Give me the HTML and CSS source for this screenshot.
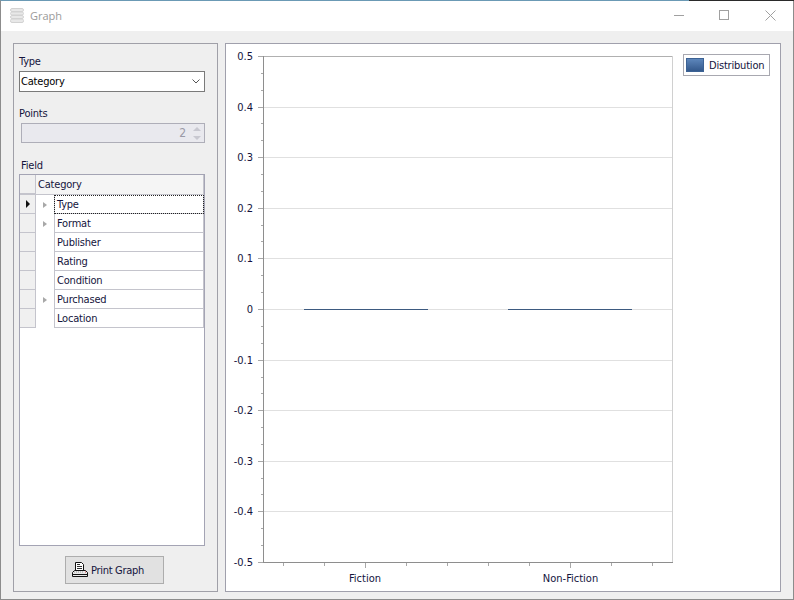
FILE: index.html
```html
<!DOCTYPE html>
<html lang="en">
<head>
<meta charset="utf-8">
<title>Graph</title>
<link rel="stylesheet" href="styles.css">
</head>
<body>
<div class="window">
  <header class="titlebar">
    <svg class="app-icon" width="14" height="15" viewBox="0 0 14 15">
      <rect x="0.5" y="0.5" width="13" height="3" rx="1.5" fill="#e8e8e8" stroke="#d2d2d2"/>
      <rect x="0.5" y="4" width="13" height="3" rx="1.5" fill="#e8e8e8" stroke="#d2d2d2"/>
      <rect x="0.5" y="7.5" width="13" height="3" rx="1.5" fill="#e8e8e8" stroke="#d2d2d2"/>
      <rect x="0.5" y="11" width="13" height="3.5" rx="1.5" fill="#e8e8e8" stroke="#d2d2d2"/>
    </svg>
    <span class="title">Graph</span>
    <div class="controls">
      <svg class="ctl" width="45" height="30" viewBox="0 0 45 30"><path d="M18 14.5h10" stroke="#a0a0a0"/></svg>
      <svg class="ctl" width="45" height="30" viewBox="0 0 45 30"><rect x="18.5" y="9.5" width="9" height="9" fill="none" stroke="#a0a0a0"/></svg>
      <svg class="ctl" width="45" height="30" viewBox="0 0 45 30"><path d="M19.5 9.5l10 10M29.5 9.5l-10 10" stroke="#a0a0a0" fill="none"/></svg>
    </div>
  </header>
  <main class="content">
    <aside class="side">
      <label class="label label-type">Type</label>
      <div class="combo">
        <span>Category</span>
        <svg width="8" height="5" viewBox="0 0 8 5"><path d="M0.5 0.5L4 4l3.5-3.5" fill="none" stroke="#555"/></svg>
      </div>
      <label class="label label-points">Points</label>
      <div class="spin">
        <span class="spin-val">2</span>
        <svg width="8" height="15" viewBox="0 0 8 15"><path d="M4 1l4 4H0zM0 10h8l-4 4z" fill="#c8c8d0"/></svg>
      </div>
      <label class="label label-field">Field</label>
      <div class="grid">
        <div class="grid-head">
          <div class="row-head"></div>
          <div class="head-cell">Category</div>
        </div>
        <div class="grid-row">
          <div class="row-head"><span class="current"></span></div>
          <div class="expander"><span class="tri"></span></div>
          <div class="cell focus">Type</div>
        </div>
        <div class="grid-row">
          <div class="row-head"></div>
          <div class="expander"><span class="tri"></span></div>
          <div class="cell">Format</div>
        </div>
        <div class="grid-row">
          <div class="row-head"></div>
          <div class="expander"></div>
          <div class="cell">Publisher</div>
        </div>
        <div class="grid-row">
          <div class="row-head"></div>
          <div class="expander"></div>
          <div class="cell">Rating</div>
        </div>
        <div class="grid-row">
          <div class="row-head"></div>
          <div class="expander"></div>
          <div class="cell">Condition</div>
        </div>
        <div class="grid-row">
          <div class="row-head"></div>
          <div class="expander"><span class="tri"></span></div>
          <div class="cell">Purchased</div>
        </div>
        <div class="grid-row">
          <div class="row-head"></div>
          <div class="expander"></div>
          <div class="cell">Location</div>
        </div>
      </div>
      <button class="print" type="button">
        <svg width="16" height="16" viewBox="0 0 16 16">
          <path d="M3.5 0.5h6l2 2v6h-8z" fill="#fff" stroke="#111"/>
          <path d="M5 2.5h3M5 4.5h5M5 6.5h5" stroke="#333"/>
          <path d="M2.5 8.5h11l2 2v4h-15v-4z" fill="#e8e8e8" stroke="#111"/>
          <path d="M2 10h10" stroke="#999" stroke-dasharray="1 1"/>
          <path d="M13 10h1" stroke="#c33"/>
          <path d="M1 12.5h14" stroke="#111"/>
        </svg>
        <span>Print Graph</span>
      </button>
    </aside>
    <section class="chart">
      <svg class="plot" width="554" height="546" viewBox="0 0 554 546">
        <g class="grid-lines">
          <path d="M37 63.5h410M37 113.5h410M37 164.5h410M37 214.5h410M37 265.5h410M37 316.5h410M37 366.5h410M37 417.5h410M37 467.5h410"/>
        </g>
        <path class="frame-top" d="M37 12.5h410"/>
        <path class="frame-right" d="M446.5 12v506"/>
        <g class="ticks-major">
          <path d="M32 12.5h5M32 63.5h5M32 113.5h5M32 164.5h5M32 214.5h5M32 265.5h5M32 316.5h5M32 366.5h5M32 417.5h5M32 467.5h5M32 518.5h5"/>
          <path d="M139.5 519v5M344.5 519v5"/>
        </g>
        <g class="ticks-minor">
          <path d="M35 29.5h2M35 46.5h2M35 79.5h2M35 96.5h2M35 130.5h2M35 147.5h2M35 181.5h2M35 197.5h2M35 231.5h2M35 248.5h2M35 282.5h2M35 299.5h2M35 333.5h2M35 349.5h2M35 383.5h2M35 400.5h2M35 434.5h2M35 450.5h2M35 484.5h2M35 501.5h2"/>
          <path d="M57.5 519v3M98.5 519v3M180.5 519v3M221.5 519v3M262.5 519v3M303.5 519v3M385.5 519v3M426.5 519v3"/>
        </g>
        <path class="axis" d="M37.5 12v507M37 518.5h410"/>
        <path class="bar" d="M78 265.5h124M282 265.5h124"/>
        <g class="y-labels">
          <text x="27" y="16">0.5</text>
          <text x="27" y="67">0.4</text>
          <text x="27" y="117">0.3</text>
          <text x="27" y="168">0.2</text>
          <text x="27" y="218">0.1</text>
          <text x="27" y="269">0</text>
          <text x="27" y="320">-0.1</text>
          <text x="27" y="370">-0.2</text>
          <text x="27" y="421">-0.3</text>
          <text x="27" y="471">-0.4</text>
          <text x="27" y="522">-0.5</text>
        </g>
        <g class="x-labels">
          <text x="139" y="538">Fiction</text>
          <text x="344.5" y="538">Non-Fiction</text>
        </g>
      </svg>
      <div class="legend">
        <span class="swatch"></span>
        <span>Distribution</span>
      </div>
    </section>
  </main>
</div>
</body>
</html>
```

FILE: styles.css
```css
* { box-sizing: border-box; }
html, body { margin: 0; padding: 0; background: #fff; overflow: hidden; }
body {
  width: 794px;
  height: 600px;
  font-family: "DejaVu Sans Condensed", "Liberation Sans", Arial, sans-serif;
  font-size: 11px;
  letter-spacing: -0.2px;
  color: #14143c;
}

.window {
  width: 794px;
  height: 600px;
  border-top: 1px solid #6b9ab5;
  border-image: none;
  border-left: 1px solid #8c8c8c;
  border-right: 1px solid #8c8c8c;
  border-bottom: 1px solid #8c8c8c;
  display: flex;
  flex-direction: column;
  background: #efefef;
  position: relative;
}
.window::before {
  content: "";
  position: absolute;
  top: -1px;
  left: 688px;
  right: -1px;
  height: 1px;
  background: #2a2a2a;
}

.titlebar {
  height: 30px;
  background: #fff;
  display: flex;
  align-items: center;
  padding-left: 9px;
  flex: none;
}
.app-icon { margin-top: -1px; }
.title {
  margin-left: 6px;
  padding-bottom: 1px;
  font-family: "Open Sans", sans-serif;
  font-size: 11px;
  letter-spacing: 0;
  color: #9a9a9a;
}
.controls { margin-left: auto; margin-right: 2px; display: flex; }
.ctl { display: block; }

.content {
  flex: 1;
  display: flex;
  gap: 7px;
  padding: 12px 12px 7px 12px;
  min-height: 0;
}

.side {
  width: 205px;
  border: 1px solid #a0a0a8;
  padding: 0 12px 0 5px;
  display: flex;
  flex-direction: column;
}
.label { display: block; line-height: 13px; color: #14143c; }
.label-type { margin-top: 11px; }
.combo {
  margin-top: 3px;
  height: 21px;
  background: #fff;
  border: 1px solid #7a7a7a;
  display: flex;
  align-items: center;
  justify-content: space-between;
  padding: 0 4px 1px 1px;
  color: #000;
}
.label-points { margin-top: 15px; }
.spin {
  margin: 3px 0 0 2px;
  height: 20px;
  background: #e9e9ee;
  border: 1px solid #aeaeb8;
  display: flex;
  align-items: center;
  justify-content: flex-end;
  gap: 7px;
  padding-right: 3px;
  color: #9a9aa6;
  font-size: 12px;
}
.label-field { margin: 16px 0 0 2px; }

.grid {
  margin-top: 2px;
  height: 372px;
  background: #fff;
  border: 1px solid #a4a4b4;
}
.grid-head {
  height: 20px;
  display: flex;
  background: #f5f5f5;
  border-bottom: 1px solid #c4c4cc;
  border-right: 1px solid #c4c4cc;
}
.grid-head .row-head { height: 19px; background: #f0f0f0; }
.head-cell { padding: 1px 2px 0; line-height: 18px; color: #14143c; }
.grid-row { height: 19px; display: flex; }
.row-head {
  width: 16px;
  flex: none;
  background: #f0f0f0;
  border-right: 1px solid #c4c4cc;
  border-bottom: 1px solid #c4c4cc;
  display: flex;
  align-items: center;
  justify-content: center;
}
.expander {
  width: 18px;
  flex: none;
  display: flex;
  align-items: center;
  justify-content: center;
  padding-right: 1px;
}
.cell {
  flex: 1;
  border-left: 1px solid #c4c4cc;
  border-right: 1px solid #c4c4cc;
  border-bottom: 1px solid #c4c4cc;
  padding: 1px 2px 0;
  line-height: 18px;
  color: #14143c;
}
.cell.focus { outline: 1px dotted #222; outline-offset: -1px; }
.tri {
  width: 0; height: 0;
  border-style: solid;
  border-width: 3.5px 0 3.5px 4px;
  border-color: transparent transparent transparent #a8a8a8;
}
.current {
  width: 0; height: 0;
  border-style: solid;
  border-width: 4px 0 4px 4px;
  border-color: transparent transparent transparent #111;
}

.print {
  align-self: flex-start;
  margin: 10px 0 0 46px;
  width: 99px;
  height: 28px;
  padding: 0 0 0 6px;
  background: #e1e1e1;
  border: 1px solid #adadad;
  display: flex;
  align-items: center;
  gap: 3px;
  font: inherit;
  letter-spacing: -0.3px;
  color: #14143c;
}

.chart {
  width: 556px;
  background: #fff;
  border: 1px solid #a0a0ac;
  display: flex;
  position: relative;
}
.plot { display: block; }
.plot path { fill: none; }
.grid-lines path { stroke: #e0e0e0; }
.frame-top { stroke: #b0b0b0; }
.frame-right { stroke: #d0d0d0; }
.axis { stroke: #8e8e8e; }
.ticks-major path, .ticks-minor path { stroke: #a8a8a8; }
.bar { stroke: #3d5a80; }
.plot text {
  font-family: "DejaVu Sans Condensed", "Liberation Sans", Arial, sans-serif;
  font-size: 11px;
  letter-spacing: 0;
  fill: #14143c;
}
.y-labels text { text-anchor: end; }
.x-labels text { text-anchor: middle; }

.legend {
  position: absolute;
  left: 457px;
  top: 10px;
  width: 87px;
  height: 22px;
  background: #fff;
  border: 1px solid #a8a8b0;
  display: flex;
  align-items: center;
  gap: 5px;
  padding-left: 2px;
  color: #14143c;
}
.swatch {
  width: 18px;
  height: 14px;
  border: 1px solid #3c6294;
  background: linear-gradient(#5d86bb, #34598c);
}
```
